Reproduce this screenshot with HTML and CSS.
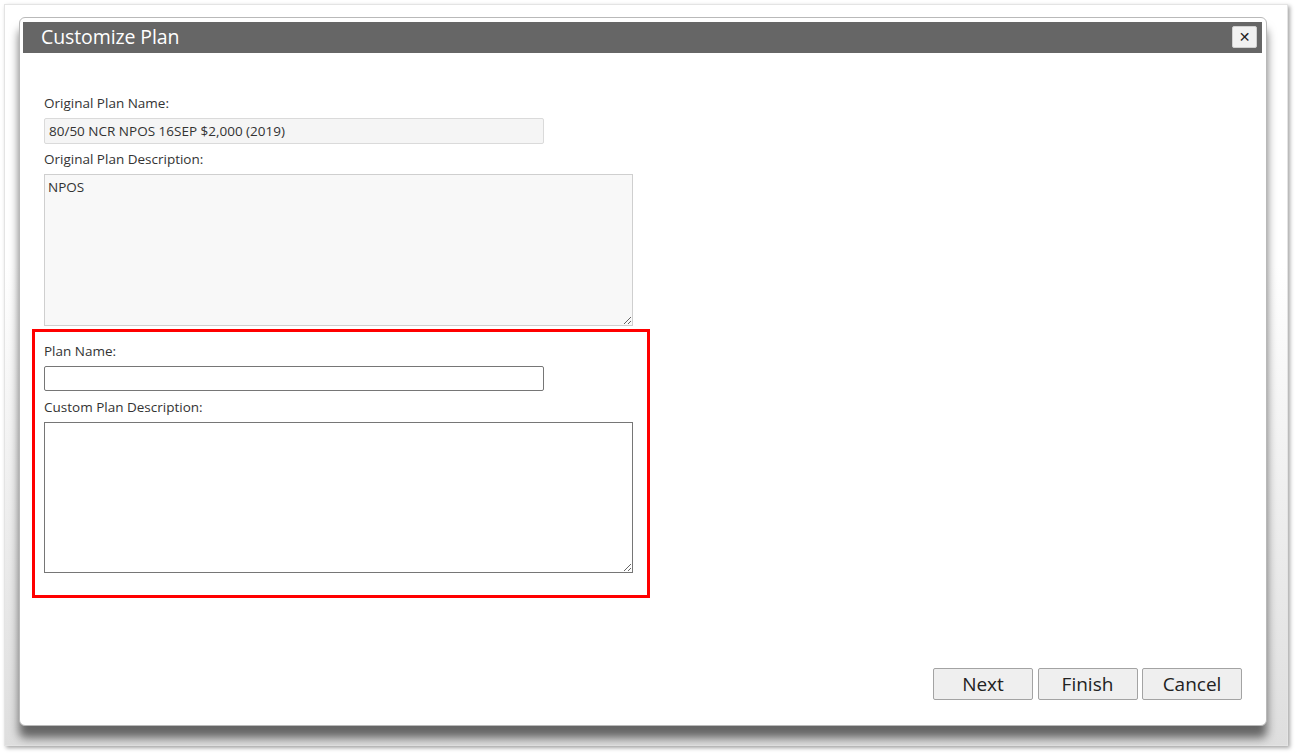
FILE: index.html
```html
<!DOCTYPE html>
<html>
<head>
<meta charset="utf-8">
<link rel="stylesheet" href="styles.css">
</head>
<body>
<div class="frame">
  <div class="dialog">
    <div class="titlebar">
      <span class="title">Customize Plan</span>
      <button class="close" type="button">&#x2715;</button>
    </div>
    <div class="content">
      <div class="original">
        <label class="lbl">Original Plan Name:</label>
        <input class="inp disabled" type="text" value="80/50 NCR NPOS 16SEP $2,000 (2019)" readonly>
        <label class="lbl">Original Plan Description:</label>
        <textarea class="ta disabled" readonly>NPOS</textarea>
      </div>
      <div class="highlight">
        <label class="lbl">Plan Name:</label>
        <input class="inp" type="text">
        <label class="lbl">Custom Plan Description:</label>
        <textarea class="ta"></textarea>
      </div>
    </div>
    <div class="actions">
      <button class="btn" type="button">Next</button>
      <button class="btn" type="button">Finish</button>
      <button class="btn" type="button">Cancel</button>
    </div>
  </div>
</div>
</body>
</html>
```
FILE: styles.css
```css
html, body {
  margin: 0;
  padding: 0;
  background: #ffffff;
}
body {
  width: 1296px;
  height: 754px;
  overflow: hidden;
  padding: 4px;
  box-sizing: border-box;
  font-family: "Open Sans", "Liberation Sans", sans-serif;
}
.frame {
  width: 1284px;
  height: 742px;
  box-sizing: border-box;
  border: 1px solid #e4e4e4;
  background: linear-gradient(to bottom, #ffffff 0%, #ffffff 35%, #dedede 100%);
  box-shadow: 2px 2px 4px rgba(0,0,0,0.35);
  padding: 12px 0 0 14px;
}
.dialog {
  width: 1248px;
  height: 709px;
  box-sizing: border-box;
  background: #ffffff;
  border: 1px solid #b9b9b9;
  border-radius: 6px;
  padding: 4px 4px 0 3px;
  display: flex;
  flex-direction: column;
  box-shadow: 0 12px 10px rgba(0,0,0,0.55);
}
.titlebar {
  height: 31px;
  background: #666666;
  display: flex;
  align-items: center;
  justify-content: space-between;
  padding: 0 5px 0 18px;
  flex: none;
}
.title {
  color: #ffffff;
  font-size: 19.5px;
  letter-spacing: -0.1px;
  line-height: 24px;
  margin-top: -1px;
}
.close {
  width: 25px;
  height: 22px;
  padding: 0;
  margin: 0;
  background: #f1f1f1;
  border: 1px solid #d0d0d0;
  border-radius: 2px;
  color: #222;
  font-size: 14px;
  line-height: 20px;
  font-family: "DejaVu Sans", sans-serif;
  margin-top: -1px;
}
.content {
  flex: 1;
  padding: 42px 0 0 9px;
}
.original {
  padding-left: 12px;
  display: flex;
  flex-direction: column;
  align-items: flex-start;
}
.lbl {
  display: block;
  font-size: 13.5px;
  line-height: 16px;
  color: #333333;
  margin-bottom: 7px;
}
.inp {
  width: 500px;
  height: 26px;
  box-sizing: border-box;
  margin: 0 0 7px 0;
  padding: 0 4px;
  font-family: "Open Sans", "Liberation Sans", sans-serif;
  font-size: 13.5px;
  color: #333333;
  border: 1px solid #767676;
  border-radius: 2px;
  background: #ffffff;
  outline: none;
}
.inp.disabled {
  background: #f5f5f5;
  border-color: #dadada;
}
.ta {
  width: 589px;
  height: 152px;
  box-sizing: border-box;
  margin: 0;
  padding: 3px 3px;
  font-family: "Open Sans", "Liberation Sans", sans-serif;
  font-size: 13.5px;
  line-height: 18px;
  color: #333333;
  border: 1px solid #767676;
  border-radius: 0;
  background: #ffffff;
  outline: none;
  display: block;
}
.ta.disabled {
  background: #f8f8f8;
  border-color: #cfcfcf;
}
.highlight {
  width: 618px;
  box-sizing: border-box;
  margin-top: 3px;
  border: 3px solid #ff0000;
  padding: 11px 0 22px 9px;
  display: flex;
  flex-direction: column;
  align-items: flex-start;
}
.highlight .inp {
  height: 25px;
  margin-bottom: 8px;
}
.highlight .ta {
  height: 151px;
}
.actions {
  flex: none;
  display: flex;
  justify-content: flex-end;
  gap: 4.5px;
  padding: 0 20px 25px 0;
}
.btn {
  width: 100px;
  height: 32px;
  box-sizing: border-box;
  margin: 0;
  padding: 0;
  background: #efefef;
  border: 1px solid #a3a3a3;
  border-radius: 2px;
  color: #222222;
  font-family: "Open Sans", "Liberation Sans", sans-serif;
  font-size: 19px;
  line-height: 28px;
}
```
